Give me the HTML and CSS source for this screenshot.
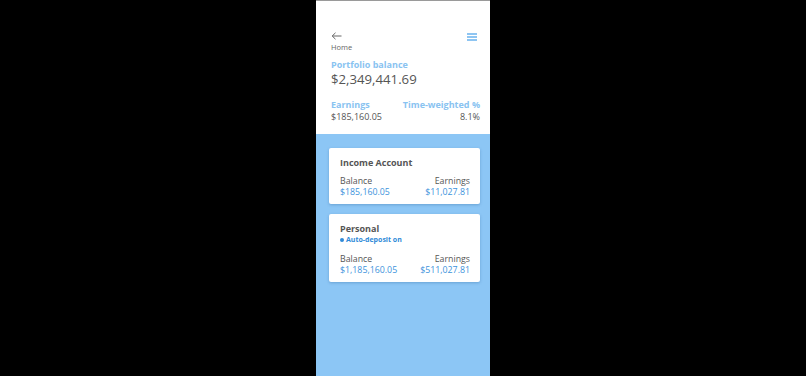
FILE: index.html
```html
<!DOCTYPE html>
<html>
<head>
<meta charset="utf-8">
<link rel="stylesheet" href="styles.css">
</head>
<body>
<div class="phone">
  <section class="top">
    <div class="header">
      <div class="back">
        <svg class="arrow" width="11" height="8" viewBox="0 0 11 8"><path d="M4.5 0.8 L1.2 4 L4.5 7.2 M1.2 4 H10.5" fill="none" stroke="#666" stroke-width="1"/></svg>
        <div class="home">Home</div>
      </div>
      <svg class="menu" width="10" height="8" viewBox="0 0 10 8"><path d="M0 1 H10 M0 4 H10 M0 7 H10" stroke="#6ab3ee" stroke-width="1.3"/></svg>
    </div>
    <div class="label">Portfolio balance</div>
    <div class="amount">$2,349,441.69</div>
    <div class="stats">
      <div class="stat">
        <div class="label">Earnings</div>
        <div class="value">$185,160.05</div>
      </div>
      <div class="stat right">
        <div class="label">Time-weighted %</div>
        <div class="value">8.1%</div>
      </div>
    </div>
  </section>
  <section class="accounts">
    <div class="card">
      <div class="title">Income Account</div>
      <div class="row">
        <div class="col">
          <div class="k">Balance</div>
          <div class="v">$185,160.05</div>
        </div>
        <div class="col right">
          <div class="k">Earnings</div>
          <div class="v">$11,027.81</div>
        </div>
      </div>
    </div>
    <div class="card">
      <div class="title">Personal</div>
      <div class="status"><span class="dot"></span>Auto-deposit on</div>
      <div class="row">
        <div class="col">
          <div class="k">Balance</div>
          <div class="v">$1,185,160.05</div>
        </div>
        <div class="col right">
          <div class="k">Earnings</div>
          <div class="v">$511,027.81</div>
        </div>
      </div>
    </div>
  </section>
</div>
</body>
</html>
```
FILE: styles.css
```css
html, body {
  margin: 0;
  padding: 0;
  background: #000;
  height: 100%;
}
body {
  font-family: "Open Sans", "Noto Sans", sans-serif;
  color: #555;
}
.phone {
  width: 174px;
  height: 376px;
  margin: 0 auto;
  display: flex;
  flex-direction: column;
  background: #8cc6f5;
  box-sizing: border-box;
  border-top: 1px solid #9a9a9a;
}
.top {
  background: #fff;
  padding: 31px 12px 11px 15px;
}
.header {
  display: flex;
  justify-content: space-between;
  align-items: flex-start;
}
.arrow { display: block; }
.menu { display: block; margin-top: 1px; margin-right: 1px; }
.home {
  font-size: 7.5px;
  line-height: 10px;
  margin-top: 2px;
  color: #666;
}
.label {
  font-size: 9px;
  font-weight: 700;
  line-height: 12px;
  color: #89c3f1;
}
.top > .label { margin-top: 7px; }
.amount {
  font-size: 13.2px;
  line-height: 16px;
  color: #555;
}
.stats {
  display: flex;
  justify-content: space-between;
  margin-top: 12px;
  margin-right: -2px;
}
.right { text-align: right; }
.value {
  font-size: 9px;
  line-height: 12px;
  color: #555;
}
.accounts {
  flex: 1;
  padding: 14px 10px 0 13px;
  display: flex;
  flex-direction: column;
  gap: 10px;
}
.card {
  background: #fff;
  border-radius: 2px;
  box-shadow: 0 1px 3px rgba(0, 60, 120, 0.25);
  padding: 9px 10px 6px 11px;
}
.title {
  font-size: 9px;
  font-weight: 700;
  line-height: 12px;
  color: #555;
}
.status {
  font-size: 7px;
  font-weight: 700;
  line-height: 10px;
  color: #2f8ad8;
  display: flex;
  align-items: center;
  gap: 2px;
}
.dot {
  width: 4px;
  height: 4px;
  border-radius: 50%;
  background: #2f8ad8;
}
.row {
  display: flex;
  justify-content: space-between;
  margin-top: 7px;
}
.status + .row { margin-top: 9px; }
.k, .v {
  font-size: 8.8px;
  line-height: 11px;
}
.k { color: #555; }
.v { color: #3d93dc; }
```
